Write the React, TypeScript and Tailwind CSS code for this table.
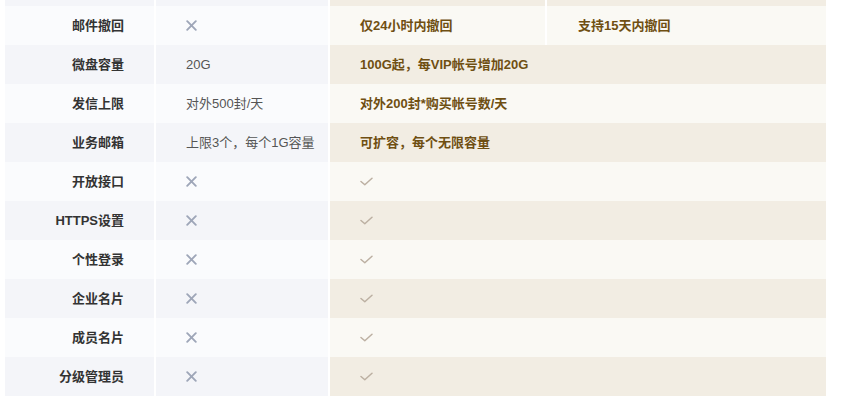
type Cell = { kind: "text"; value: string } | { kind: "no" } | { kind: "yes" };

type Row = {
  label: string;
  basic: Cell;
  vip: Cell;
  vipAlt?: string;
};

const rows: Row[] = [
  { label: "邮件撤回", basic: { kind: "no" }, vip: { kind: "text", value: "仅24小时内撤回" }, vipAlt: "支持15天内撤回" },
  { label: "微盘容量", basic: { kind: "text", value: "20G" }, vip: { kind: "text", value: "100G起，每VIP帐号增加20G" } },
  { label: "发信上限", basic: { kind: "text", value: "对外500封/天" }, vip: { kind: "text", value: "对外200封*购买帐号数/天" } },
  { label: "业务邮箱", basic: { kind: "text", value: "上限3个，每个1G容量" }, vip: { kind: "text", value: "可扩容，每个无限容量" } },
  { label: "开放接口", basic: { kind: "no" }, vip: { kind: "yes" } },
  { label: "HTTPS设置", basic: { kind: "no" }, vip: { kind: "yes" } },
  { label: "个性登录", basic: { kind: "no" }, vip: { kind: "yes" } },
  { label: "企业名片", basic: { kind: "no" }, vip: { kind: "yes" } },
  { label: "成员名片", basic: { kind: "no" }, vip: { kind: "yes" } },
  { label: "分级管理员", basic: { kind: "no" }, vip: { kind: "yes" } },
];

function Cross() {
  return (
    <svg width="11" height="11" viewBox="0 0 11 11" className="block">
      <path d="M1.2 1.2 L9.8 9.8 M9.8 1.2 L1.2 9.8" stroke="#9ea6b8" strokeWidth="1.9" strokeLinecap="round" />
    </svg>
  );
}

function Check() {
  return (
    <svg width="13" height="9" viewBox="0 0 13 9" className="block">
      <path d="M1 4.5 L4.8 7.8 L12 1.2" stroke="#bcb0a2" strokeWidth="1.5" fill="none" strokeLinecap="round" strokeLinejoin="round" />
    </svg>
  );
}

function BasicCell({ cell }: { cell: Cell }) {
  if (cell.kind === "no") return <Cross />;
  if (cell.kind === "yes") return <Check />;
  return <span className="text-[13px] text-[#555]">{cell.value}</span>;
}

function VipCell({ cell }: { cell: Cell }) {
  if (cell.kind === "yes") return <Check />;
  if (cell.kind === "no") return <Cross />;
  return <span className="text-[13px] font-bold text-[#6f4f12]">{cell.value}</span>;
}

export default function App() {
  return (
    <div
      className="h-[401px] w-[848px] bg-white pl-[5px]"
      style={{ fontFamily: '"Liberation Sans", "Noto Sans CJK SC", sans-serif' }}
    >
      {/* partial row cut off at the top */}
      <div className="flex h-[6px] gap-[2px]">
        <div className="w-[149px] bg-[#f4f5f9]" />
        <div className="w-[172px] bg-[#f4f5f9]" />
        <div className="flex w-[496px] gap-[2px]">
          <div className="w-[215px] bg-[#f2ede3]" />
          <div className="flex-1 bg-[#f2ede3]" />
        </div>
      </div>

      {rows.map((row, i) => {
        const odd = i % 2 === 0;
        const leftBg = odd ? "bg-[#fafbfd]" : "bg-[#f4f5f9]";
        const vipBg = odd ? "bg-[#faf9f4]" : "bg-[#f2ede3]";
        return (
          <div key={row.label} className="flex h-[39px] gap-[2px]">
            <div className={`flex w-[149px] items-center justify-end pr-[30px] ${leftBg}`}>
              <span className="text-[13px] font-bold text-[#333]">{row.label}</span>
            </div>
            <div className={`flex w-[172px] items-center pl-[30px] ${leftBg}`}>
              <BasicCell cell={row.basic} />
            </div>
            {row.vipAlt ? (
              <div className="flex w-[496px] gap-[2px]">
                <div className={`flex w-[215px] items-center pl-[30px] ${vipBg}`}>
                  <VipCell cell={row.vip} />
                </div>
                <div className={`flex flex-1 items-center pl-[31px] ${vipBg}`}>
                  <span className="text-[13px] font-bold text-[#6f4f12]">{row.vipAlt}</span>
                </div>
              </div>
            ) : (
              <div className={`flex w-[496px] items-center pl-[30px] ${vipBg}`}>
                <VipCell cell={row.vip} />
              </div>
            )}
          </div>
        );
      })}
    </div>
  );
}
